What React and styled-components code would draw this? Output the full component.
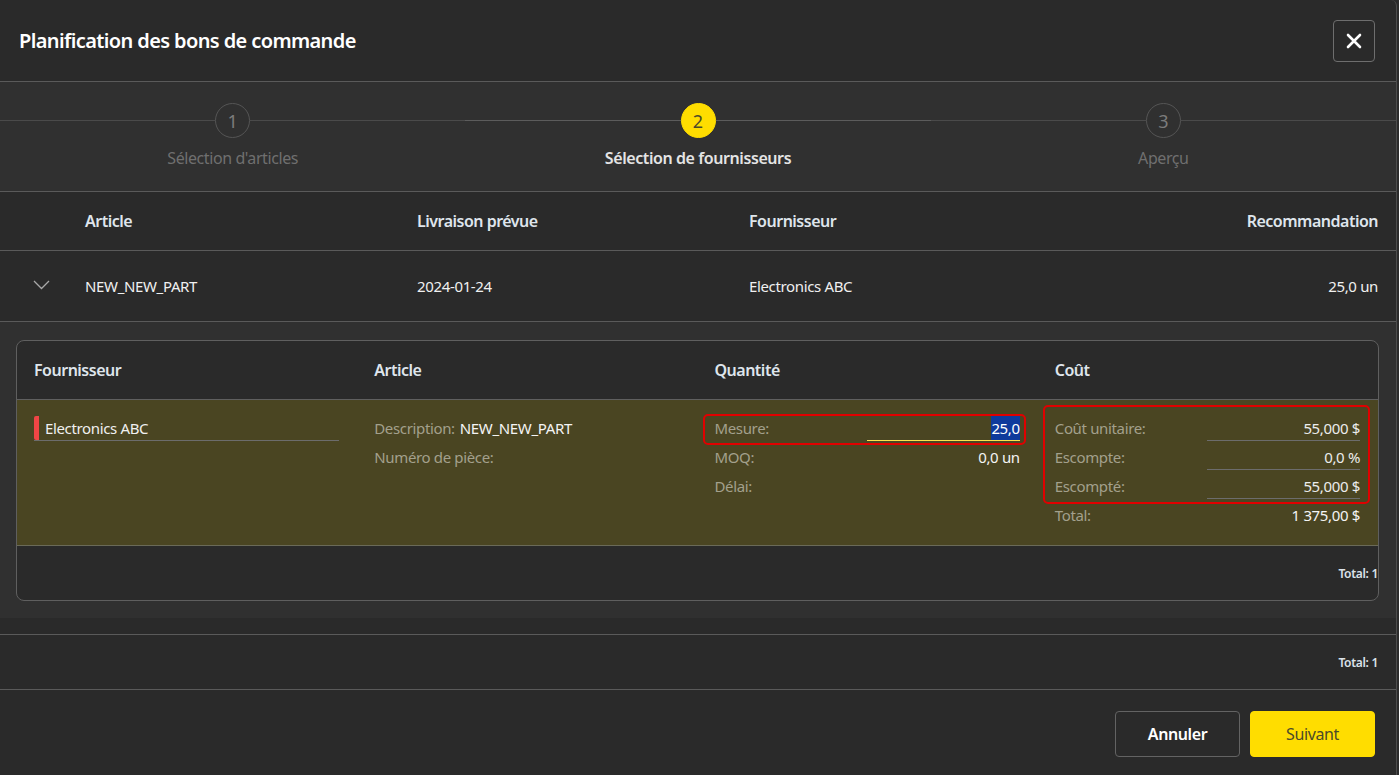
import React from "react";
import styled, { createGlobalStyle } from "styled-components";

const Global = createGlobalStyle`
  html, body { margin: 0; padding: 0; background: #2b2b2b; height: 100%; overflow: hidden; }
  * { box-sizing: border-box; }
  body { font-family: "Noto Sans", "Open Sans", sans-serif; color: #e6e6e6; }
`;

const Modal = styled.div`
  width: 1397px;
  height: 775px;
  display: flex;
  flex-direction: column;
  background: #2a2a2a;
  border-right: 1px solid #4d4d4d;
  border-top-right-radius: 6px;
  font-size: 15px;
  letter-spacing: -0.35px;
`;

const Header = styled.header`
  height: 82px;
  flex: none;
  display: flex;
  align-items: center;
  justify-content: space-between;
  padding: 0 21px 0 19px;
  border-bottom: 1px solid #5a5a5a;
`;

const Title = styled.h1`
  margin: 0;
  font-size: 20px;
  font-weight: 600;
  letter-spacing: -0.62px;
  color: #fff;
`;

const CloseButton = styled.button`
  width: 42px;
  height: 42px;
  padding: 0;
  display: grid;
  place-items: center;
  background: transparent;
  border: 1px solid #6e6e6e;
  border-radius: 4px;
  color: #fff;
`;

const Stepper = styled.nav`
  height: 110px;
  flex: none;
  display: grid;
  grid-template-columns: repeat(3, 1fr);
  padding-top: 21px;
  background: #303030;
  border-bottom: 1px solid #5a5a5a;
`;

const Step = styled.div`
  display: flex;
  flex-direction: column;
  align-items: center;
  gap: 10px;
`;

const Track = styled.div`
  width: 100%;
  display: flex;
  align-items: center;
`;

const Connector = styled.span`
  flex: 1;
  height: 1px;
  background: ${(p) => (p.$active ? "#5c5c5c" : "#4a4a4a")};
`;

const Bubble = styled.span`
  width: 35px;
  height: 35px;
  display: grid;
  place-items: center;
  border-radius: 50%;
  font-size: 18px;
  letter-spacing: 0;
  background: ${(p) => (p.$active ? "#ffdd00" : "transparent")};
  color: ${(p) => (p.$active ? "#4b4a2a" : "#7c7c7c")};
  border: 1px solid ${(p) => (p.$active ? "#ffdd00" : "#555")};
`;

const StepLabel = styled.span`
  font-size: 16px;
  line-height: 20px;
  font-weight: ${(p) => (p.$active ? 600 : 400)};
  letter-spacing: -0.42px;
  color: ${(p) => (p.$active ? "#e4e4e4" : "#6f6f6f")};
`;

const OuterGrid = styled.div`
  flex: none;
  display: grid;
  grid-template-columns: 85px 332px 332px 1fr auto;
  align-items: center;
  padding-right: 18px;
  height: ${(p) => p.$h}px;
  border-bottom: 1px solid #5a5a5a;
`;

const HeadCell = styled.div`
  font-size: 16px;
  font-weight: 600;
  letter-spacing: -0.5px;
  color: #dfe5ec;
`;

const Cell = styled.div`
  color: #f0f0f0;
`;

const ChevronSlot = styled.div`
  display: flex;
  justify-content: flex-start;
  padding: 0 0 3px 33px;
  color: #a8a8a8;
`;

const Expanded = styled.section`
  height: 296px;
  flex: none;
  padding: 18px 17px 17px 16px;
  background: #303030;
`;

const Card = styled.div`
  height: 261px;
  display: flex;
  flex-direction: column;
  background: #2a2a2a;
  border: 1px solid #5f5f5f;
  border-radius: 8px;
  overflow: hidden;
`;

const CardColumns = styled.div`
  display: grid;
  grid-template-columns: repeat(4, 1fr);
`;

const CardHead = styled(CardColumns)`
  height: 59px;
  flex: none;
  align-items: center;
  border-bottom: 1px solid #5f5f5f;
`;

const CardHeadCell = styled(HeadCell)`
  padding-left: 17px;
`;

const CardRow = styled(CardColumns)`
  height: 146px;
  flex: none;
  padding-top: 16px;
  background: #4a4522;
  border-bottom: 1px solid #6a6a58;
`;

const Col = styled.div`
  padding: 0 18px 0 17px;
  display: flex;
  flex-direction: column;
`;

const SupplierField = styled.div`
  width: 305px;
  height: 25px;
  display: flex;
  align-items: center;
  border-bottom: 1px solid #6c6c6c;
  color: #f0f0f0;
`;

const Marker = styled.span`
  width: 5px;
  height: 24px;
  margin-right: 6px;
  background: #f04545;
  border-radius: 2px 0 0 2px;
`;

const Line = styled.div`
  height: 29px;
  display: flex;
  align-items: flex-start;
  justify-content: ${(p) => (p.$inline ? "flex-start" : "space-between")};
  gap: ${(p) => (p.$inline ? "5px" : "0")};
  line-height: 25px;
`;

const Flagged = styled.div`
  position: relative;
  &::after {
    content: "";
    position: absolute;
    top: ${(p) => p.$top}px;
    bottom: ${(p) => p.$bottom}px;
    left: -12px;
    right: ${(p) => p.$right}px;
    border: 2px solid #e00000;
    border-radius: 5px;
    pointer-events: none;
  }
`;

const Label = styled.span`
  color: #a3a08c;
`;

const Value = styled.span`
  color: #f4f4f4;
`;

const Field = styled.div`
  width: 153px;
  height: 25px;
  text-align: right;
  color: #ececec;
  border-bottom: 1px solid ${(p) => (p.$focus ? "#ffe14a" : "#6c6c6c")};
`;

const Selection = styled.span`
  display: inline-block;
  height: 24px;
  line-height: 25px;
  background: #0e3a9c;
  color: #fff;
`;

const CardFoot = styled.div`
  flex: 1;
  display: flex;
  align-items: center;
  justify-content: flex-end;
  padding: 0 18px igloo;
`;

const TotalText = styled.span`
  font-size: 12px;
  font-weight: 600;
  letter-spacing: -0.3px;
  color: #dbe2ea;
`;

const Gap = styled.div`
  height: 17px;
  flex: none;
  border-bottom: 1px solid #5a5a5a;
`;

const TableFoot = styled.div`
  height: 55px;
  flex: none;
  display: flex;
  align-items: center;
  justify-content: flex-end;
  padding-right: 18px;
  border-bottom: 1px solid #5a5a5a;
`;

const Actions = styled.footer`
  flex: 1;
  display: flex;
  justify-content: flex-end;
  gap: 10px;
  padding: 21px 21px 0 0;
`;

const Button = styled.button`
  width: 125px;
  height: 46px;
  font-family: inherit;
  font-size: 16px;
  letter-spacing: -0.4px;
  border-radius: 4px;
  font-weight: ${(p) => (p.$primary ? 400 : 600)};
  background: ${(p) => (p.$primary ? "#ffdd00" : "transparent")};
  color: ${(p) => (p.$primary ? "#4b4a2a" : "#fff")};
  border: 1px solid ${(p) => (p.$primary ? "#ffdd00" : "#636363")};
`;

const steps = ["Sélection d'articles", "Sélection de fournisseurs", "Aperçu"];

export default function App() {
  return (
    <>
      <Global />
      <Modal>
        <Header>
          <Title>Planification des bons de commande</Title>
          <CloseButton aria-label="Fermer">
            <svg width="16" height="16" viewBox="0 0 16 16" fill="none" stroke="currentColor" strokeWidth="2.6" strokeLinecap="round">
              <path d="M2 2l12 12M14 2L2 14" />
            </svg>
          </CloseButton>
        </Header>
        <Stepper>
          {steps.map((s, i) => (
            <Step key={s}>
              <Track>
                <Connector $active={i === 1} />
                <Bubble $active={i === 1}>{i + 1}</Bubble>
                <Connector $active={i === 1} />
              </Track>
              <StepLabel $active={i === 1}>{s}</StepLabel>
            </Step>
          ))}
        </Stepper>
        <OuterGrid $h={59}>
          <span />
          <HeadCell>Article</HeadCell>
          <HeadCell>Livraison prévue</HeadCell>
          <HeadCell>Fournisseur</HeadCell>
          <HeadCell>Recommandation</HeadCell>
        </OuterGrid>
        <OuterGrid $h={71}>
          <ChevronSlot>
            <svg width="17" height="10" viewBox="0 0 17 10" fill="none" stroke="currentColor" strokeWidth="1.3">
              <path d="M1 1l7.5 7.5L16 1" />
            </svg>
          </ChevronSlot>
          <Cell>NEW_NEW_PART</Cell>
          <Cell>2024-01-24</Cell>
          <Cell>Electronics ABC</Cell>
          <Cell>25,0 un</Cell>
        </OuterGrid>
        <Expanded>
          <Card>
            <CardHead>
              <CardHeadCell>Fournisseur</CardHeadCell>
              <CardHeadCell>Article</CardHeadCell>
              <CardHeadCell>Quantité</CardHeadCell>
              <CardHeadCell>Coût</CardHeadCell>
            </CardHead>
            <CardRow>
              <Col>
                <SupplierField>
                  <Marker />
                  Electronics ABC
                </SupplierField>
              </Col>
              <Col>
                <Line $inline>
                  <Label>Description:</Label>
                  <Value>NEW_NEW_PART</Value>
                </Line>
                <Line $inline>
                  <Label>Numéro de pièce:</Label>
                </Line>
              </Col>
              <Col>
                <Flagged $top={-2} $bottom={0} $right={-6}>
                  <Line>
                    <Label>Mesure:</Label>
                    <Field $focus>
                      <Selection>25,0</Selection>
                    </Field>
                  </Line>
                </Flagged>
                <Line>
                  <Label>MOQ:</Label>
                  <Value>0,0 un</Value>
                </Line>
                <Line>
                  <Label>Délai:</Label>
                </Line>
              </Col>
              <Col>
                <Flagged $top={-11} $bottom={-1} $right={-10}>
                  <Line>
                    <Label>Coût unitaire:</Label>
                    <Field>55,000 $</Field>
                  </Line>
                  <Line>
                    <Label>Escompte:</Label>
                    <Field>0,0 %</Field>
                  </Line>
                  <Line>
                    <Label>Escompté:</Label>
                    <Field>55,000 $</Field>
                  </Line>
                </Flagged>
                <Line>
                  <Label>Total:</Label>
                  <Value>1 375,00 $</Value>
                </Line>
              </Col>
            </CardRow>
            <CardFoot>
              <TotalText>Total: 1</TotalText>
            </CardFoot>
          </Card>
        </Expanded>
        <Gap />
        <TableFoot>
          <TotalText>Total: 1</TotalText>
        </TableFoot>
        <Actions>
          <Button>Annuler</Button>
          <Button $primary>Suivant</Button>
        </Actions>
      </Modal>
    </>
  );
}
